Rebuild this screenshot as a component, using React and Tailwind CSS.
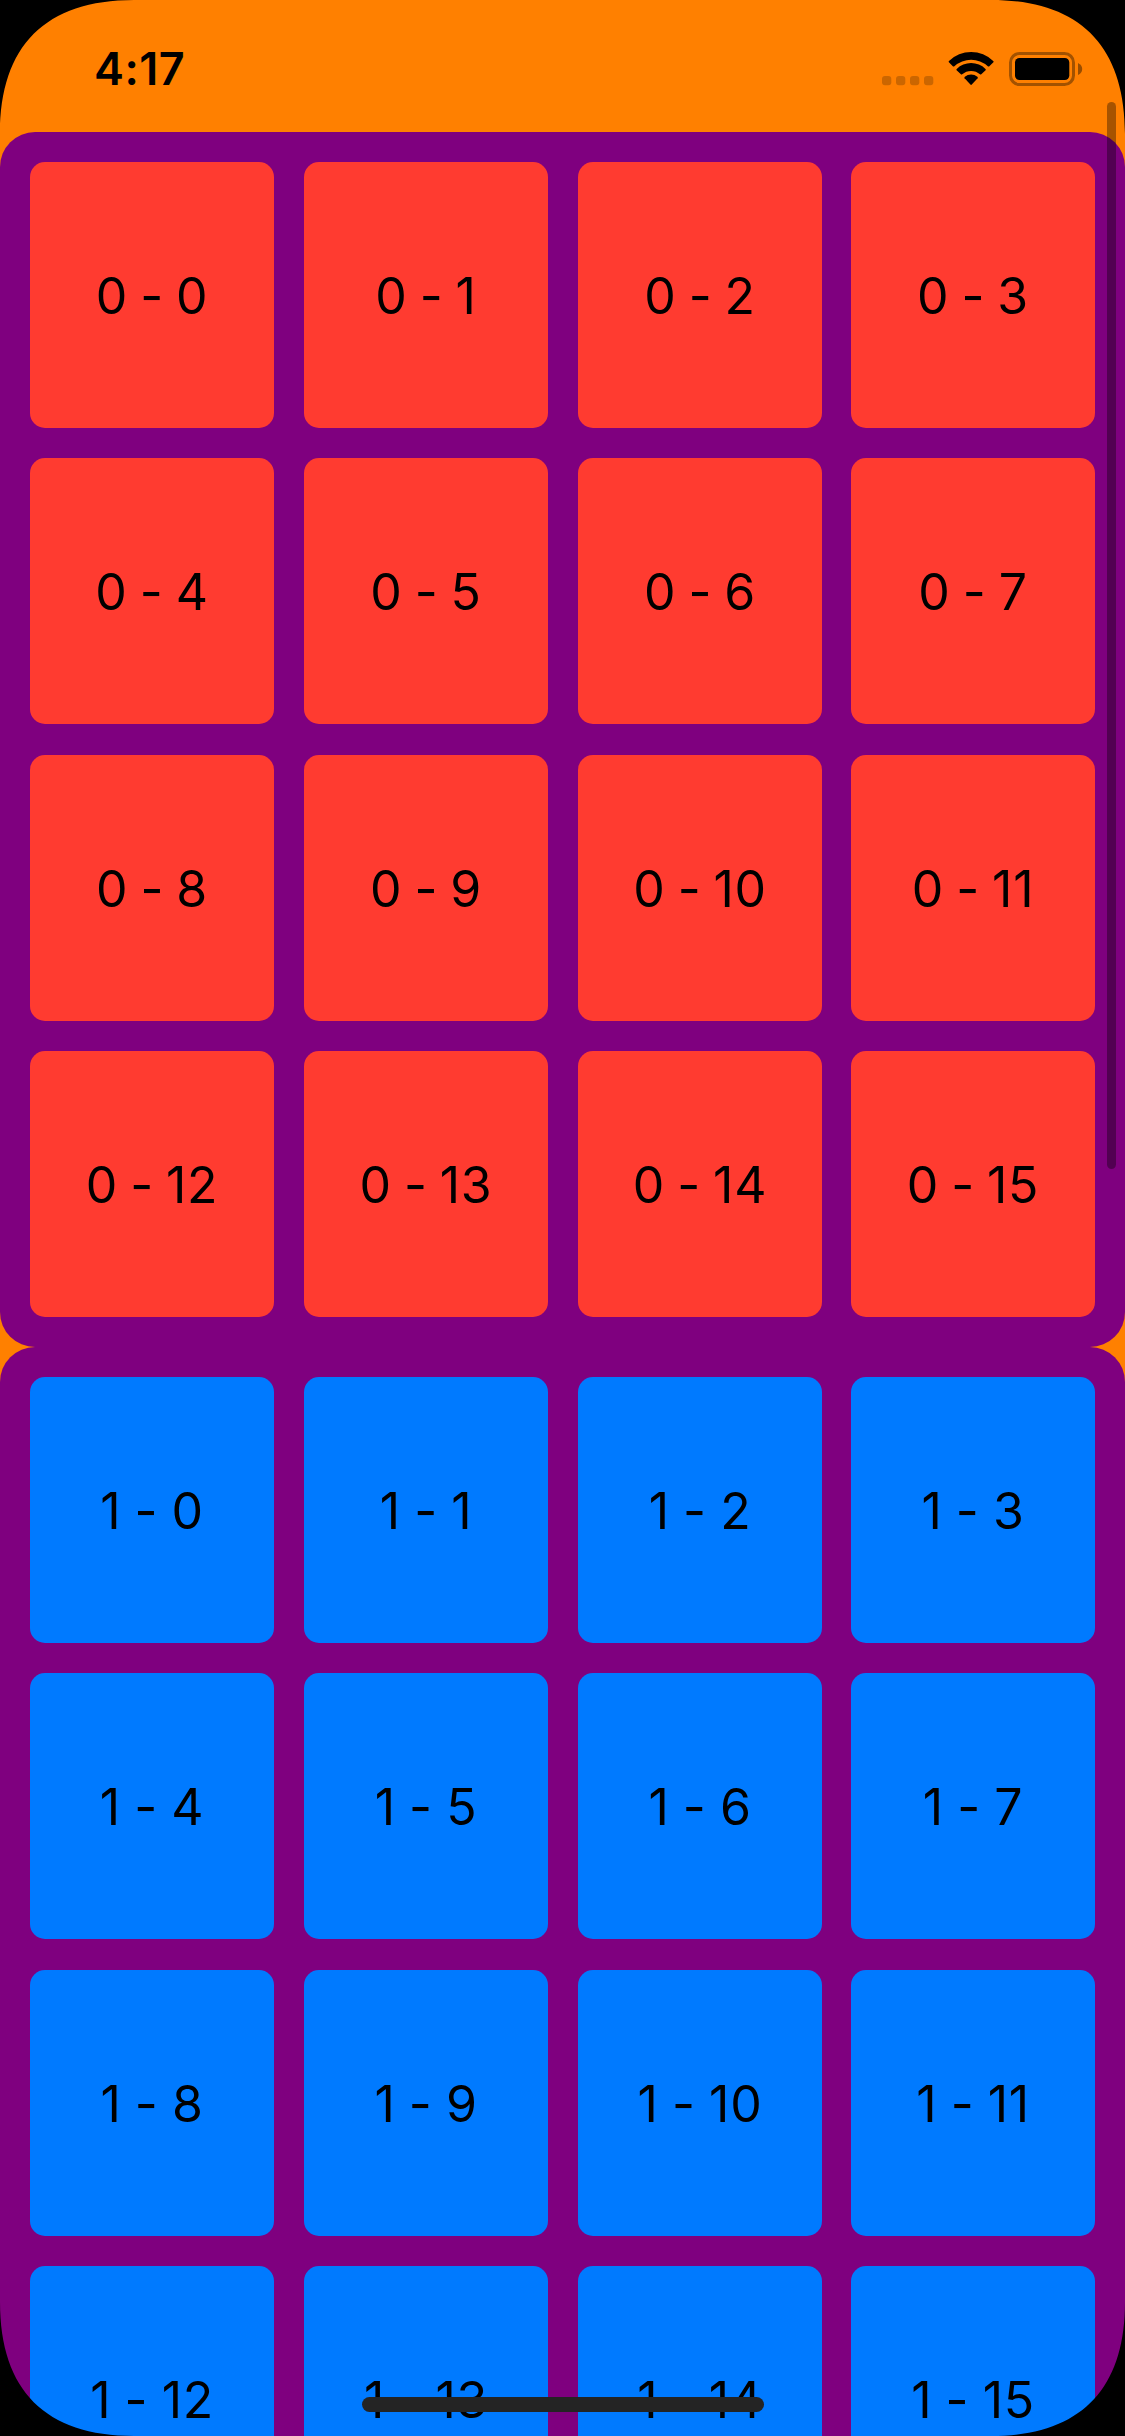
const sections = [
  { id: 0, tile: "bg-[#ff3b30] [word-spacing:-2.6px]" },
  { id: 1, tile: "bg-[#007aff] [word-spacing:-1.4px]" },
];

const corners = [
  "top-0 left-0",
  "top-0 right-0 -scale-x-100",
  "bottom-0 left-0 -scale-y-100",
  "bottom-0 right-0 -scale-100",
];

function Corner({ place }) {
  return (
    <svg className={`absolute size-[134px] ${place}`} viewBox="0 0 100 100">
      <path d="M0 0H100C34 0 0 34 0 100Z" />
    </svg>
  );
}

function StatusBar() {
  return (
    <header className="flex h-[132px] justify-between pl-[94px] pr-[42px]">
      <time className="mt-[43px] text-[45px] leading-[52px] font-semibold tracking-[0.5px]">4:17</time>
      <svg className="mt-[48px] h-[44px] w-[206px]" viewBox="0 0 206 44">
        <g opacity=".2">
          <rect x="5" y="28" width="9.3" height="9.3" rx="3" />
          <rect x="19" y="28" width="9.3" height="9.3" rx="3" />
          <rect x="33" y="28" width="9.3" height="9.3" rx="3" />
          <rect x="47" y="28" width="9.3" height="9.3" rx="3" />
        </g>
        <path d="M71.9 14.3Q71.4 13.6 72 13A31.5 31.5 0 0 1 116.2 13Q116.9 13.6 116.4 14.3L112.1 18.4Q111.4 18.8 110.8 18.2A25 25 0 0 0 77.4 18.2Q76.8 18.8 76.1 18.4Z" />
        <path d="M79.6 22.2Q79 21.6 79.7 20.9A20.5 20.5 0 0 1 108.5 20.9Q109.2 21.6 108.6 22.2L104.3 26.3Q103.7 26.8 103 26.3A13.5 13.5 0 0 0 85.2 26.3Q84.5 26.8 83.9 26.3Z" />
        <path d="M87.6 30.2Q87.1 29.5 87.8 28.8A9.6 9.6 0 0 1 100.4 28.8Q101.2 29.5 100.6 30.2L94.8 36.6Q94.1 37.3 93.4 36.6Z" />
        <rect x="133.5" y="5.5" width="63" height="31" rx="9" fill="none" stroke="#000" strokeOpacity=".36" strokeWidth="3" />
        <rect x="138" y="10" width="54.3" height="22" rx="4.5" />
        <path d="M201 15Q205.2 17 205.2 21T201 27Z" fillOpacity=".4" />
      </svg>
    </header>
  );
}

export default function App() {
  return (
    <main className="relative h-[2436px] w-[1125px] overflow-hidden bg-[#ff8000] font-[Inter,sans-serif] text-black">
      <StatusBar />
      {sections.map(({ id, tile }) => (
        <section
          key={id}
          className="grid h-[1215px] grid-cols-[274px_274px_273px_244px] grid-rows-[296px_297px_296px_266px] rounded-[35px] bg-[#7f007f] p-[30px]"
        >
          {Array.from({ length: 16 }, (_, i) => (
            <div
              key={i}
              className={`flex h-[266px] w-[244px] items-center justify-center rounded-[15px] pt-[3px] text-[50px] tracking-[0.7px] [font-feature-settings:'calt'_0] ${tile}`}
            >
              {id} - {i}
            </div>
          ))}
        </section>
      ))}
      <div className="absolute top-[102px] right-[9px] h-[1067px] w-[9px] rounded-full bg-black/35" />
      <div className="absolute bottom-[24px] left-[362px] h-[15px] w-[402px] rounded-full bg-[#242424]" />
      {corners.map((place) => (
        <Corner key={place} place={place} />
      ))}
    </main>
  );
}
